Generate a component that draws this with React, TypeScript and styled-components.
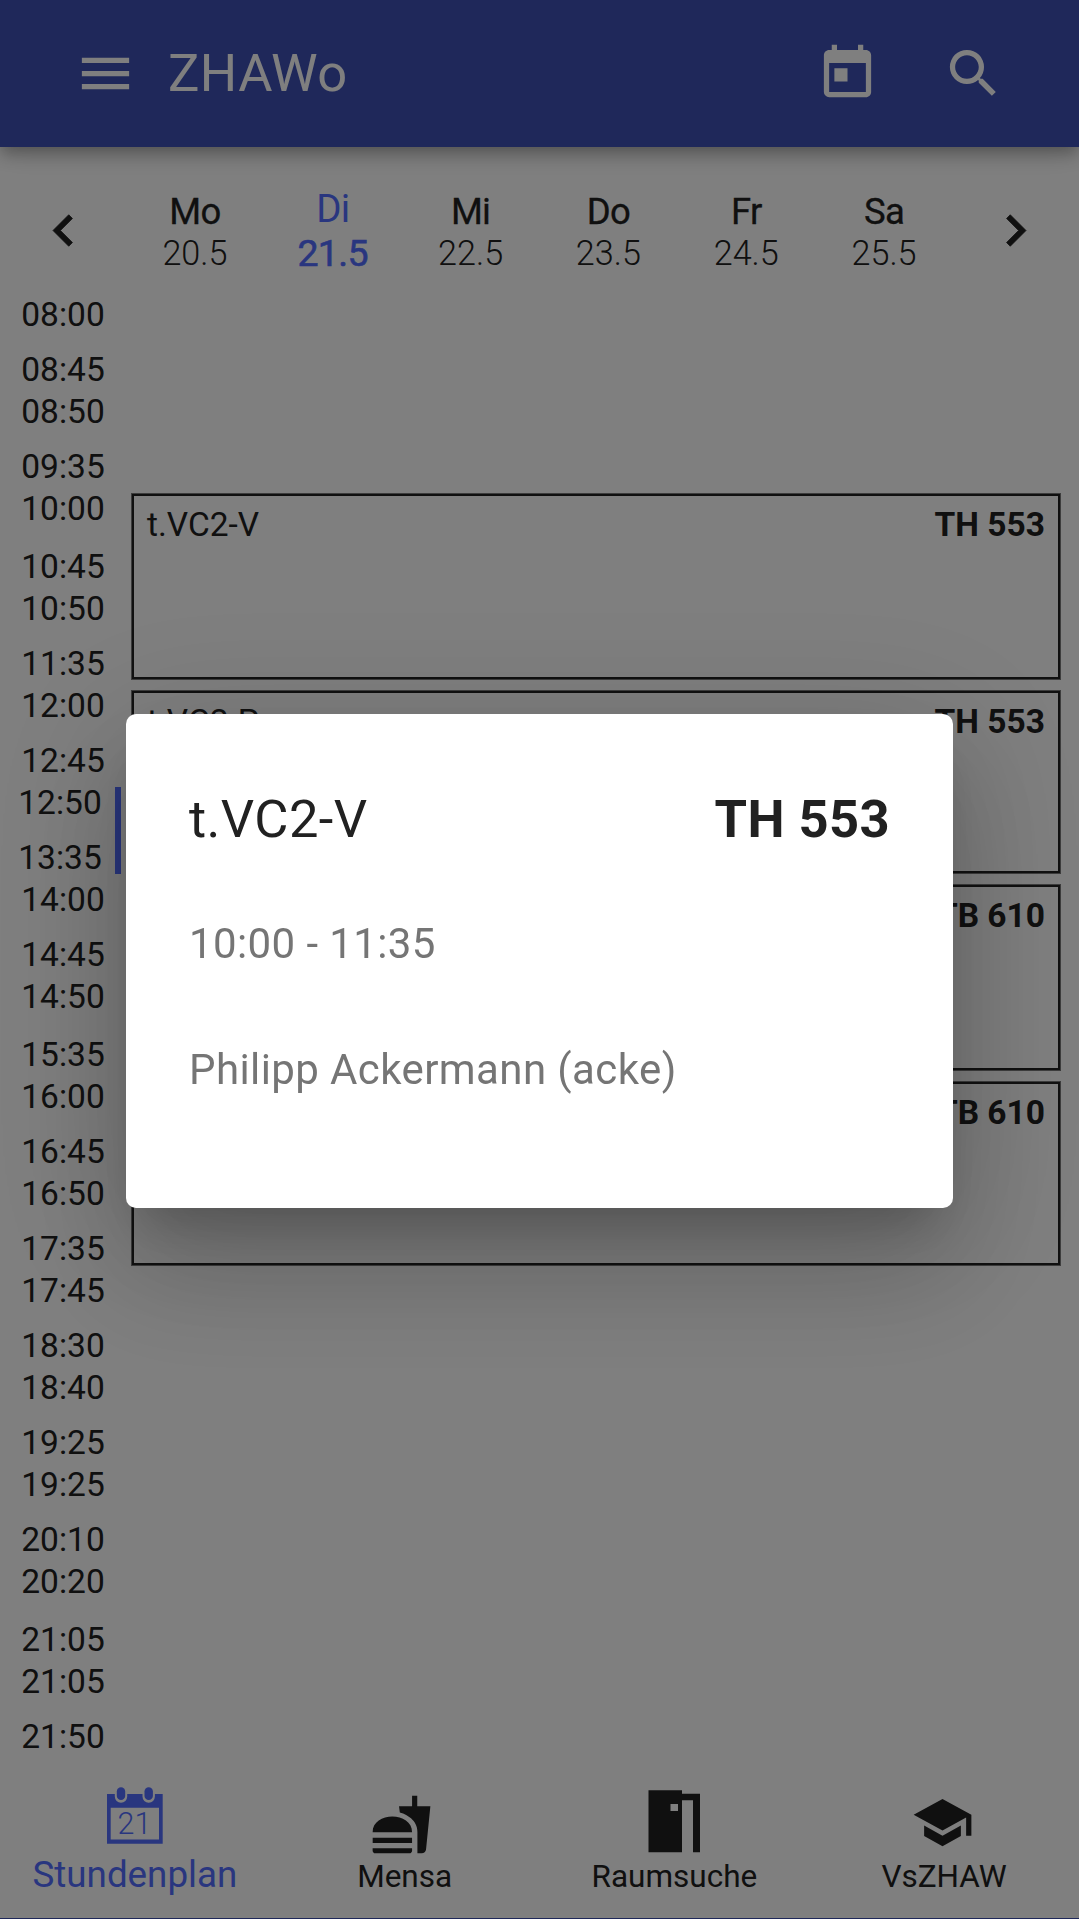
import React from "react";
import styled, { createGlobalStyle } from "styled-components";
import {
  MdMenu,
  MdToday,
  MdSearch,
  MdChevronLeft,
  MdChevronRight,
  MdFastfood,
  MdSchool,
} from "react-icons/md";

const GlobalStyle = createGlobalStyle`
  * { box-sizing: border-box; }
  body { margin: 0; background: #fff; font-family: Roboto, "Liberation Sans", sans-serif; color: #212121; }
`;

const Screen = styled.div`
  width: 1079px;
  height: 1919px;
  display: flex;
  flex-direction: column;
  overflow: hidden;
  border-bottom: 1px solid #3f51b5;
`;

const AppBar = styled.header`
  flex: none;
  height: 147px;
  padding: 0 74px;
  display: flex;
  align-items: center;
  gap: 63px;
  background: #3f51b5;
  color: #fff;
  box-shadow: 0 5px 13px -3px rgba(0, 0, 0, 0.2), 0 10px 16px 0 rgba(0, 0, 0, 0.14),
    0 3px 31px 0 rgba(0, 0, 0, 0.12);
`;

const BarTitle = styled.h1`
  flex: 1;
  margin: 0 0 0 -32px;
  font-size: 52.5px;
  font-weight: 400;
  line-height: 61px;
  letter-spacing: 0.4px;
`;

const DayStrip = styled.nav`
  flex: none;
  height: 146px;
  display: flex;
  padding-top: 21px;
`;

const ArrowButton = styled.div`
  width: 126px;
  height: 125px;
  display: flex;
  align-items: center;
  justify-content: center;
  path:not([fill="none"]) {
    stroke: currentColor;
    stroke-width: 0.3px;
  }
`;

const Day = styled.div<{ $active?: boolean }>`
  flex: 1;
  height: 126px;
  padding-top: ${(p) => (p.$active ? 0 : 1)}px;
  display: flex;
  flex-direction: column;
  align-items: center;
  justify-content: center;
  color: ${(p) => (p.$active ? "#536dfe" : "#212121")};
`;

const DayName = styled.span<{ $active?: boolean }>`
  font-size: ${(p) => (p.$active ? 38.5 : 36.5)}px;
  line-height: ${(p) => (p.$active ? 44 : 42)}px;
  letter-spacing: -0.7px;
  -webkit-text-stroke: ${(p) => (p.$active ? "0" : "0.3px #212121")};
`;

const DayDate = styled.span<{ $active?: boolean }>`
  font-size: ${(p) => (p.$active ? 37.5 : 34.2)}px;
  line-height: ${(p) => (p.$active ? 45 : 40)}px;
  font-weight: ${(p) => (p.$active ? 400 : 300)};
  letter-spacing: ${(p) => (p.$active ? -0.6 : 0)}px;
  -webkit-text-stroke: ${(p) => (p.$active ? "0.6px #536dfe" : "0")};
`;

const Schedule = styled.main`
  flex: 1;
  display: flex;
`;

const TimeColumn = styled.div`
  width: 126px;
  padding: 0 5px;
`;

const Slot = styled.div<{ $height: number }>`
  height: ${(p) => p.$height}px;
  padding: 6px 0 4px;
`;

const SlotTimes = styled.div<{ $current?: boolean }>`
  height: 100%;
  display: flex;
  flex-direction: column;
  justify-content: space-between;
  align-items: center;
  border-right: ${(p) => (p.$current ? "6px solid #536dfe" : "none")};
`;

const Time = styled.span`
  font-size: 33.5px;
  line-height: 32px;
`;

const EventColumn = styled.div`
  flex: 1;
  padding: 200px 18px 0 5px;
  display: flex;
  flex-direction: column;
  gap: 10px;
`;

const Lesson = styled.article<{ $height: number }>`
  height: ${(p) => p.$height}px;
  padding: 13px 15px;
  display: flex;
  justify-content: space-between;
  align-items: flex-start;
  border: 1px solid rgba(33, 33, 33, 0.6);
  box-shadow: inset 0 0 0 2px #212121;
  font-size: 33.5px;
  line-height: 36px;
`;

const Room = styled.strong`
  margin-left: auto;
  font-weight: 700;
`;

const BottomNav = styled.footer`
  flex: none;
  height: 147px;
  display: flex;
`;

const NavItem = styled.div<{ $active?: boolean }>`
  flex: 1;
  display: flex;
  flex-direction: column;
  align-items: center;
  padding-top: 19px;
  color: ${(p) => (p.$active ? "#536dfe" : "#212121")};
`;

const NavIcon = styled.div<{ $shift?: number; $drop?: number }>`
  height: 63px;
  margin-left: ${(p) => p.$shift ?? 0}px;
  padding-top: ${(p) => p.$drop ?? 0}px;
  svg {
    display: block;
    overflow: visible;
  }
`;

const NavLabel = styled.span<{ $active?: boolean }>`
  font-size: ${(p) => (p.$active ? 36.75 : 31.5)}px;
  line-height: ${(p) => (p.$active ? 43 : 48)}px;
`;

const Scrim = styled.div`
  position: fixed;
  inset: 0;
  width: 1079px;
  height: 1919px;
  display: flex;
  align-items: center;
  justify-content: center;
  background: rgba(0, 0, 0, 0.5);
`;

const Dialog = styled.section`
  width: 827px;
  height: 493.5px;
  margin-top: 2.5px;
  padding: 68px 63px;
  border-radius: 10px;
  background: #fff;
  box-shadow: 0 29px 46px -18px rgba(0, 0, 0, 0.2), 0 63px 116px 8px rgba(0, 0, 0, 0.14),
    0 24px 140px 21px rgba(0, 0, 0, 0.12);
`;

const DialogTitle = styled.div`
  display: flex;
  font-size: 52.5px;
  line-height: 74px;
  letter-spacing: 0.4px;
  margin-bottom: 57px;
`;

const DialogText = styled.p`
  margin: 0 0 64px;
  font-size: 42px;
  line-height: 62px;
  letter-spacing: 0.4px;
  color: #757575;
`;

const days = [
  ["Mo", "20.5"],
  ["Di", "21.5"],
  ["Mi", "22.5"],
  ["Do", "23.5"],
  ["Fr", "24.5"],
  ["Sa", "25.5"],
];

const slots: [string, string, number][] = [
  ["08:00", "08:45", 97],
  ["08:50", "09:35", 97],
  ["10:00", "10:45", 100],
  ["10:50", "11:35", 97],
  ["12:00", "12:45", 97],
  ["12:50", "13:35", 97],
  ["14:00", "14:45", 97],
  ["14:50", "15:35", 100],
  ["16:00", "16:45", 97],
  ["16:50", "17:35", 97],
  ["17:45", "18:30", 97],
  ["18:40", "19:25", 97],
  ["19:25", "20:10", 97],
  ["20:20", "21:05", 100],
  ["21:05", "21:50", 97],
];

const lessons: { title?: string; room: string; height: number }[] = [
  { title: "t.VC2-V", room: "TH 553", height: 187 },
  { title: "t.VC2-P", room: "TH 553", height: 184 },
  { room: "TB 610", height: 187 },
  { room: "TB 610", height: 185 },
];

const CalendarIcon = ({ day }: { day: number }) => (
  <svg width="56" height="63" viewBox="0 0 56 63" fill="currentColor">
    <path
      fillRule="evenodd"
      d="M0 4H7.800V6.500a6.200 6.200 0 0 0 12.400 0V4H35.500V6.500a6.200 6.200 0 0 0 12.400 0V4H55.700V53.800H0ZM3.700 17.700V49.500H52V17.700Z"
    />
    <rect x="9.800" y="-2.700" width="8.400" height="12.800" rx="4.200" />
    <rect x="37.500" y="-2.700" width="8.400" height="12.800" rx="4.200" />
    <text x="27.500" y="43.700" fontSize="30.500" fontWeight="300" textAnchor="middle">
      {day}
    </text>
  </svg>
);

const DoorIcon = () => (
  <svg width="63" height="63" viewBox="0 0 63 63" fill="currentColor">
    <path
      fillRule="evenodd"
      d="M5.500 .2H39V3.700H57V62.300H50V10.200H39V62.300H5.500ZM27.500 14V21H35V14Z"
    />
  </svg>
);

export default function App() {
  return (
    <>
      <GlobalStyle />
      <Screen>
        <AppBar>
          <MdMenu size={63} />
          <BarTitle>ZHAWo</BarTitle>
          <MdToday size={63} />
          <MdSearch size={63} />
        </AppBar>
        <DayStrip>
          <ArrowButton>
            <MdChevronLeft size={63} />
          </ArrowButton>
          {days.map(([name, date]) => (
            <Day key={name} $active={name === "Di"}>
              <DayName $active={name === "Di"}>{name}</DayName>
              <DayDate $active={name === "Di"}>{date}</DayDate>
            </Day>
          ))}
          <ArrowButton>
            <MdChevronRight size={63} />
          </ArrowButton>
        </DayStrip>
        <Schedule>
          <TimeColumn>
            {slots.map(([from, to, height]) => (
              <Slot key={from + to} $height={height}>
                <SlotTimes $current={from === "12:50"}>
                  <Time>{from}</Time>
                  <Time>{to}</Time>
                </SlotTimes>
              </Slot>
            ))}
          </TimeColumn>
          <EventColumn>
            {lessons.map(({ title, room, height }, i) => (
              <Lesson key={i} $height={height}>
                {title && <span>{title}</span>}
                <Room>{room}</Room>
              </Lesson>
            ))}
          </EventColumn>
        </Schedule>
        <BottomNav>
          <NavItem $active>
            <NavIcon>
              <CalendarIcon day={21} />
            </NavIcon>
            <NavLabel $active>Stundenplan</NavLabel>
          </NavItem>
          <NavItem>
            <NavIcon $shift={-6} $drop={2.5}>
              <MdFastfood size={63} />
            </NavIcon>
            <NavLabel>Mensa</NavLabel>
          </NavItem>
          <NavItem>
            <NavIcon>
              <DoorIcon />
            </NavIcon>
            <NavLabel>Raumsuche</NavLabel>
          </NavItem>
          <NavItem>
            <NavIcon $shift={-4} $drop={0.5}>
              <MdSchool size={63} />
            </NavIcon>
            <NavLabel>VsZHAW</NavLabel>
          </NavItem>
        </BottomNav>
      </Screen>
      <Scrim>
        <Dialog>
          <DialogTitle>
            <span>t.VC2-V</span>
            <Room>TH 553</Room>
          </DialogTitle>
          <DialogText>10:00 - 11:35</DialogText>
          <DialogText>Philipp Ackermann (acke)</DialogText>
        </Dialog>
      </Scrim>
    </>
  );
}
